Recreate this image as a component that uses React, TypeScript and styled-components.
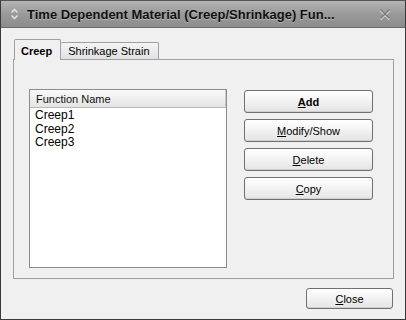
import React from "react";
import styled, { createGlobalStyle } from "styled-components";

const GlobalStyle = createGlobalStyle`
  html, body {
    margin: 0;
    padding: 0;
    background: #f0f0f0;
  }
  * {
    box-sizing: border-box;
  }
`;

const buttons = [
  { key: "A", rest: "dd", bold: true },
  { key: "M", rest: "odify/Show" },
  { key: "D", rest: "elete" },
  { key: "C", rest: "opy" },
];

const items = ["Creep1", "Creep2", "Creep3"];

const App = () => {
  return (
    <>
      <GlobalStyle />
      <Window>
        <TitleBar>
          <TitleIcon width="9" height="12" viewBox="0 0 9 12">
            <path d="M1.5 4.5 L4.5 1.5 L7.5 4.5" fill="none" stroke="#e8e8e8" strokeWidth="1.4" />
            <path d="M1.5 7.5 L4.5 10.5 L7.5 7.5" fill="none" stroke="#e8e8e8" strokeWidth="1.4" />
          </TitleIcon>
          <TitleText>Time Dependent Material (Creep/Shrinkage) Fun...</TitleText>
          <CloseIcon width="12" height="12" viewBox="0 0 12 12">
            <path d="M1.5 1.5 L10.5 10.5 M10.5 1.5 L1.5 10.5" stroke="#dcdcdc" strokeWidth="1.8" transform="translate(0 1)" />
            <path d="M1.5 1.5 L10.5 10.5 M10.5 1.5 L1.5 10.5" stroke="#7c7c7c" strokeWidth="1.5" />
          </CloseIcon>
        </TitleBar>
        <Body>
          <TabStrip>
            <Tab $active>Creep</Tab>
            <Tab>Shrinkage Strain</Tab>
          </TabStrip>
          <Panel>
            <List>
              <ListHeader>Function Name</ListHeader>
              {items.map((item) => (
                <ListItem key={item}>{item}</ListItem>
              ))}
            </List>
            <ButtonColumn>
              {buttons.map((b) => (
                <Button key={b.key} $bold={b.bold}>
                  <u>{b.key}</u>
                  {b.rest}
                </Button>
              ))}
            </ButtonColumn>
          </Panel>
          <Footer>
            <CloseButton>
              <u>C</u>lose
            </CloseButton>
          </Footer>
        </Body>
      </Window>
    </>
  );
};

const Window = styled.div`
  width: 406px;
  height: 320px;
  border: 1px solid #3a3a3a;
  border-top-color: #555;
  display: flex;
  flex-direction: column;
  background: #f0f0f0;
  font-family: "Liberation Sans", Arial, sans-serif;
  overflow: hidden;
`;

const TitleBar = styled.div`
  height: 27px;
  flex-shrink: 0;
  display: flex;
  align-items: center;
  padding: 0 14px 0 9px;
  background: linear-gradient(#b4b4b4, #9a9a9a 50%, #8c8c8c);
  border-bottom: 1px solid #6a6a6a;
`;

const TitleIcon = styled.svg`
  flex-shrink: 0;
  margin-right: 8px;
`;

const TitleText = styled.div`
  flex: 1;
  font-size: 13px;
  font-weight: bold;
  color: #111;
  text-shadow: 0 1px 0 rgba(255, 255, 255, 0.35);
  white-space: nowrap;
`;

const CloseIcon = styled.svg`
  flex-shrink: 0;
`;

const Body = styled.div`
  flex: 1;
  display: flex;
  flex-direction: column;
  padding: 11px 12px 0 12px;
`;

const TabStrip = styled.div`
  display: flex;
  align-items: flex-end;
  height: 21px;
  padding-left: 1px;
  position: relative;
  z-index: 1;
  margin-bottom: -1px;
`;

const Tab = styled.div<{ $active?: boolean }>`
  height: ${(p) => (p.$active ? "21px" : "18px")};
  padding: ${(p) => (p.$active ? "2px 8px 0 6px" : "0 8px 0 7px")};
  display: flex;
  align-items: center;
  font-size: 11px;
  font-weight: ${(p) => (p.$active ? "bold" : "normal")};
  color: #000;
  border: 1px solid #a0a0a0;
  border-bottom: ${(p) => (p.$active ? "none" : "1px solid #a0a0a0")};
  border-left: ${(p) => (p.$active ? "1px solid #a0a0a0" : "none")};
  background: ${(p) => (p.$active ? "#f0f0f0" : "linear-gradient(#f4f4f4, #e2e2e2)")};
  border-radius: 2px 2px 0 0;
`;

const Panel = styled.div`
  width: 381px;
  height: 220px;
  border: 1px solid #a0a0a0;
  background: #f0f0f0;
  display: flex;
  align-items: flex-start;
  padding: 29px 0 0 15px;
  gap: 17px;
`;

const List = styled.div`
  width: 198px;
  height: 179px;
  border: 1px solid #8c8c8c;
  background: #fff;
  display: flex;
  flex-direction: column;
`;

const ListHeader = styled.div`
  height: 18px;
  flex-shrink: 0;
  display: flex;
  align-items: center;
  padding-left: 6px;
  font-size: 11px;
  color: #111;
  background: linear-gradient(#fafafa, #e4e4e4);
  border-bottom: 1px solid #b8b8b8;
  border-right: 1px solid #c8c8c8;
  margin-bottom: 1px;
`;

const ListItem = styled.div`
  height: 13.5px;
  line-height: 13.5px;
  padding-left: 5px;
  font-size: 12px;
  color: #000;
`;

const ButtonColumn = styled.div`
  display: flex;
  flex-direction: column;
  gap: 6px;
  margin-top: 1px;
`;

const Button = styled.div<{ $bold?: boolean }>`
  width: 129px;
  height: 23px;
  display: flex;
  align-items: center;
  justify-content: center;
  font-size: 11px;
  font-weight: ${(p) => (p.$bold ? "bold" : "normal")};
  color: #000;
  border: 1px solid #707070;
  border-radius: 3px;
  background: linear-gradient(#ffffff, #f2f2f2 50%, #e4e4e4);
  box-shadow: inset 0 -1px 0 #d0d0d0;
`;

const Footer = styled.div`
  display: flex;
  justify-content: flex-end;
  padding-top: 9px;
`;

const CloseButton = styled(Button)`
  width: 87px;
  height: 21px;
`;

export default App;
